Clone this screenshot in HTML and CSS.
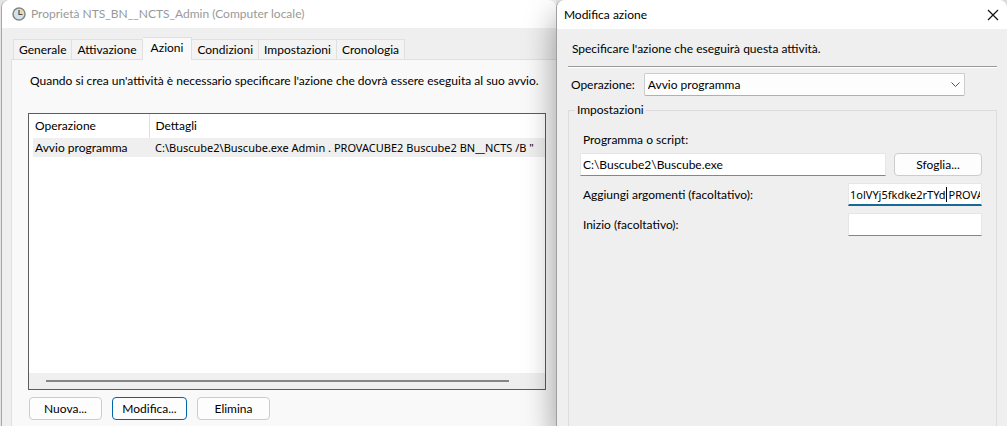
FILE: index.html
```html
<!DOCTYPE html>
<html lang="it">
<head>
    <meta charset="UTF-8">
    <meta name="viewport" content="width=device-width, initial-scale=1.0">
    <title>Modifica azione</title>
    <link rel="stylesheet" href="styles.css">
</head>
<body>
    <div class="desktop">
        <section class="window properties">
            <header class="titlebar titlebar-inactive">
                <svg class="clock" width="14" height="14" viewBox="0 0 14 14">
                    <circle cx="7" cy="7" r="6" fill="#d3e3ec" stroke="#858585" stroke-width="1.5"/>
                    <path d="M7 7V1.8A5.2 5.2 0 0 1 12.2 7Z" fill="#f0d9a0"/>
                    <path d="M7 3V7.5H10.5" fill="none" stroke="#4c4c4c" stroke-width="1.2"/>
                </svg>
                <span>Proprietà NTS_BN__NCTS_Admin (Computer locale)</span>
            </header>

            <div class="tabs" role="tablist">
                <button class="tab" role="tab">Generale</button>
                <button class="tab" role="tab">Attivazione</button>
                <button class="tab tab-active" role="tab" aria-selected="true">Azioni</button>
                <button class="tab" role="tab">Condizioni</button>
                <button class="tab" role="tab">Impostazioni</button>
                <button class="tab" role="tab">Cronologia</button>
            </div>

            <div class="panel">
                <p class="intro">Quando si crea un'attività è necessario specificare l'azione che dovrà essere eseguita al suo avvio.</p>
                <div class="list">
                    <table class="actions">
                        <thead>
                            <tr><th class="col-operation">Operazione</th><th>Dettagli</th></tr>
                        </thead>
                        <tbody>
                            <tr><td>Avvio programma</td><td class="command">C:\Buscube2\Buscube.exe Admin . PROVACUBE2 Buscube2 BN__NCTS /B "</td></tr>
                        </tbody>
                    </table>
                    <div class="scrollbar"><div class="thumb"></div></div>
                </div>
                <div class="button-row">
                    <button class="button">Nuova...</button>
                    <button class="button button-default">Modifica...</button>
                    <button class="button">Elimina</button>
                </div>
            </div>
        </section>

        <section class="window dialog">
            <header class="titlebar titlebar-dialog">
                <span>Modifica azione</span>
                <button class="close" aria-label="Chiudi">
                    <svg width="12" height="12" viewBox="0 0 12 12">
                        <path d="M1 1L11 11M11 1L1 11" stroke="#111" stroke-width="1.2"/>
                    </svg>
                </button>
            </header>
            <div class="dialog-body">
                <p class="hint">Specificare l'azione che eseguirà questa attività.</p>
                <hr class="separator">
                <div class="operation">
                    <label for="operation">Operazione:</label>
                    <select id="operation" class="select">
                        <option>Avvio programma</option>
                    </select>
                </div>
                <fieldset class="settings">
                    <legend>Impostazioni</legend>
                    <label class="script-label" for="script">Programma o script:</label>
                    <div class="script-row">
                        <input class="field script-field" id="script" type="text" value="C:\Buscube2\Buscube.exe">
                        <button class="button browse">Sfoglia...</button>
                    </div>
                    <div class="field-row">
                        <label for="arguments">Aggiungi argomenti (facoltativo):</label>
                        <div class="field-box">
                            <input class="field field-focus command" id="arguments" type="text" value="1olVYj5fkdke2rTYd PROVACUBE2">
                            <span class="caret"></span>
                        </div>
                    </div>
                    <div class="field-row">
                        <label for="start">Inizio (facoltativo):</label>
                        <div class="field-box">
                            <input class="field" id="start" type="text">
                        </div>
                    </div>
                </fieldset>
            </div>
        </section>
    </div>
</body>
</html>
```

FILE: styles.css
```css
*{
    box-sizing: border-box;
}

body{
    margin: 0;
    background-color: #e4e4e4;
}

body, button, input, select{
    font-family: Lato, "Open Sans", sans-serif;
    font-size: 12px;
    line-height: 16px;
    color: #000;
}

p{
    margin: 0;
}

.desktop{
    display: flex;
    min-height: 100vh;
    overflow: hidden;
}

.window{
    display: flex;
    flex-direction: column;
    background-color: #efefef;
    min-width: 0;
}

.properties{
    flex: 555;
    margin-left: 1px;
    border-left: 1px solid #a8a8a8;
    border-top-left-radius: 8px;
}

.dialog{
    flex: 451;
    position: relative;
    border-left: 1px solid #a0a0a0;
    border-radius: 8px 8px 0 0;
    box-shadow: 0 16px 32px rgba(0, 0, 0, 0.4);
}

.titlebar{
    display: flex;
    align-items: center;
    height: 28px;
    background-color: #fff;
    border-radius: 8px 8px 0 0;
}

.titlebar-inactive{
    gap: 5px;
    padding-left: 10px;
    color: #999;
}

.titlebar-dialog{
    justify-content: space-between;
    height: 29px;
    padding: 0 6px 0 7px;
}

.close{
    display: flex;
    padding: 2px;
    border: 0;
    background: none;
}

.tabs{
    display: flex;
    align-items: flex-end;
    padding: 9px 0 0 11px;
}

.tab{
    height: 20px;
    padding: 0 5px;
    border: 1px solid #e0e0e0;
    border-width: 1px 1px 0 0;
    background-color: #f3f3f3;
    white-space: nowrap;
}

.tab:first-child{
    border-left-width: 1px;
}

.tab-active{
    height: 23px;
    margin-bottom: -1px;
    padding: 0 8px 3px;
    background-color: #f9f9f9;
    z-index: 1;
}

.panel{
    flex: 1;
    margin-left: 9px;
    padding: 13px 10px 6px 16px;
    border: 1px solid #e0e0e0;
    border-width: 1px 0 0 1px;
    background-color: #f9f9f9;
}

.intro{
    padding-left: 2px;
    white-space: nowrap;
}

.list{
    display: flex;
    flex-direction: column;
    height: 277px;
    margin-top: 24px;
    padding-left: 4px;
    border: 1px solid #5c5c5c;
    background-color: #fff;
    overflow: hidden;
}

.actions{
    width: 100%;
    table-layout: fixed;
    border-collapse: collapse;
    white-space: nowrap;
}

.actions th, .actions td{
    padding: 0 0 0 2px;
    font-weight: normal;
    text-align: left;
    overflow: hidden;
}

.actions th{
    height: 24px;
}

.actions .col-operation{
    width: 116px;
    border-right: 1px solid #e0e0e0;
}

.actions th + th, .actions td + td{
    padding-left: 6px;
}

.actions td{
    height: 19px;
    background-color: #efefef;
}

.command{
    font-family: "Noto Sans", sans-serif;
    font-size: 11px;
}

.scrollbar{
    height: 16px;
    margin: auto 0 0 -4px;
    padding: 7px 36px 7px 17px;
    background-color: #efefef;
}

.thumb{
    height: 2px;
    background-color: #868686;
}

.button-row{
    display: flex;
    gap: 10px;
    margin-top: 7px;
    padding-left: 1px;
}

.button{
    width: 73px;
    height: 23px;
    padding: 0;
    border: 1px solid #ccc;
    border-radius: 4px;
    background-color: #fdfdfd;
}

.button-default{
    width: 75px;
    border-color: #0067a8;
}

.dialog-body{
    padding: 12px 10px 0 11px;
}

.hint{
    padding-left: 4px;
}

.separator{
    height: 2px;
    margin: 9px 0 5px;
    border: 0;
    border-top: 1px solid #999;
    background-color: #fff;
}

.operation{
    display: flex;
    align-items: center;
    gap: 9px;
    padding: 0 32px 0 3px;
}

.select{
    flex: 1;
    height: 23px;
    padding: 0 3px;
    appearance: none;
    border: 1px solid #ccc;
    border-bottom-color: #b0b0b0;
    border-radius: 2px;
    background: #fdfdfd url("data:image/svg+xml,%3Csvg xmlns='http://www.w3.org/2000/svg' width='9' height='5'%3E%3Cpath d='M.5.5l4 4 4-4' fill='none' stroke='%23555'/%3E%3C/svg%3E") no-repeat right 4px center;
}

.settings{
    min-width: 0;
    margin: 6px 0 0;
    padding: 14px 14px 0 11px;
    border: 1px solid #dcdcdc;
    border-bottom: 0;
    height: 325px;
}

.settings legend{
    margin-left: -5px;
    padding: 0 2px;
}

.script-label{
    display: block;
    padding-left: 3px;
}

.script-row{
    display: flex;
    align-items: flex-end;
    gap: 8px;
    margin-top: 5px;
}

.field{
    display: block;
    width: 100%;
    height: 23px;
    padding: 0 2px;
    border: 1px solid #e6e6e6;
    border-bottom-color: #868686;
    background-color: #fff;
    outline: 0;
}

.script-field{
    flex: 1;
    min-width: 0;
}

.field-focus{
    padding: 0 1px;
    border-bottom: 2px solid #1a6898;
}

.browse{
    width: 88px;
}

.field-row{
    display: flex;
    align-items: center;
    justify-content: space-between;
    margin-top: 7px;
    padding-left: 3px;
}

.field-box{
    position: relative;
    width: 134px;
}

.caret{
    position: absolute;
    top: 4px;
    left: 98px;
    width: 1px;
    height: 15px;
    background-color: #000;
}
```
